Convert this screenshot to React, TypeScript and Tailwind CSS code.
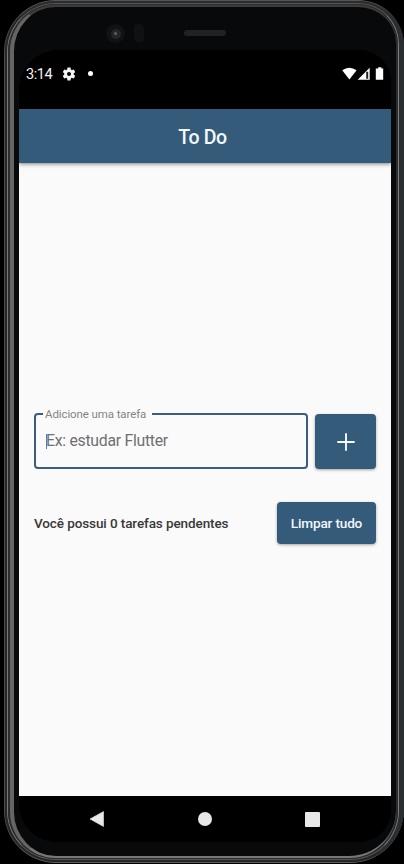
function Gear() {
  return (
    <svg viewBox="0 0 24 24" className="ml-[9px] h-[16px] w-[16px]" fill="#f4f4f4">
      <path d="M19.14 12.94c.04-.3.06-.61.06-.94 0-.32-.02-.64-.07-.94l2.03-1.58a.49.49 0 0 0 .12-.61l-1.92-3.32a.49.49 0 0 0-.59-.22l-2.39.96c-.5-.38-1.03-.7-1.62-.94l-.36-2.54a.48.48 0 0 0-.48-.41h-3.84a.48.48 0 0 0-.47.41l-.36 2.54c-.59.24-1.13.57-1.62.94l-2.39-.96a.48.48 0 0 0-.59.22L2.74 8.87a.48.48 0 0 0 .12.61l2.03 1.58c-.05.3-.09.63-.09.94s.02.64.07.94l-2.03 1.58a.49.49 0 0 0-.12.61l1.92 3.32c.12.22.37.29.59.22l2.39-.96c.5.38 1.03.7 1.62.94l.36 2.54c.05.24.24.41.48.41h3.84c.24 0 .44-.17.47-.41l.36-2.54c.59-.24 1.13-.56 1.62-.94l2.39.96c.22.08.47 0 .59-.22l1.92-3.32a.48.48 0 0 0-.12-.61l-2.01-1.58zM12 15A3 3 0 1 1 12 9a3 3 0 0 1 0 6z" />
    </svg>
  );
}

function StatusBar() {
  return (
    <div className="flex h-[59px] items-start bg-black pr-[6px] pl-[7px] text-[#f2f2f2]">
      <div className="flex h-[47px] flex-1 items-center">
        <span className="pt-[3px] text-[14.5px] leading-none tracking-[-0.4px]">3:14</span>
        <Gear />
        <span className="ml-[11px] h-[5px] w-[5px] rounded-full bg-white" />
      </div>
      <svg viewBox="0 0 43 14" className="mt-[17px] h-[14px] w-[43px]" fill="#fff">
        <path d="M0.2 3.2Q7.3-1.8 14.6 3.2L7.4 12.4z" />
        <path d="M27.7 0.8V12.8H15.7z" />
        <path d="M24.2 4.8h2v7h-2z" fill="#222" />
        <path d="M36.2 0.2h3.2v1.3h1.8V12.8h-7.4V1.5h2.4z" />
      </svg>
    </div>
  );
}

function AppBar() {
  return (
    <header className="z-10 flex h-[54px] items-center justify-center bg-[#355b7b] pt-[3px] pr-[5px] text-[19.5px] font-medium tracking-[-0.35px] text-[#f3f8fd] shadow-[0_1px_4px_rgba(0,0,0,0.5)]">
      To Do
    </header>
  );
}

function TaskField() {
  return (
    <fieldset className="h-[62px] w-[274px] rounded-[4px] border-2 border-[#3a5c7e] pl-[10px]">
      <legend className="-ml-[3px] h-[14px] w-[109px] pl-[2px] text-[11.5px] leading-[14px] tracking-[-0.1px] whitespace-nowrap text-[#858585]">
        Adicione uma tarefa
      </legend>
      <div className="flex items-center pt-[12px]">
        <span className="h-[15px] w-px bg-[#3486e8]" />
        <span className="-ml-px text-[15.8px] leading-[16px] tracking-[-0.27px] text-[#707070]">Ex: estudar Flutter</span>
      </div>
    </fieldset>
  );
}

function Content() {
  return (
    <main className="flex flex-1 flex-col bg-[#fafafa] pt-[244px] pr-[15px] pl-[15px]">
      <div className="flex items-end justify-between">
        <TaskField />
        <button className="flex h-[55px] w-[61px] items-center justify-center rounded-[4px] bg-[#355b7b] shadow-[0_1px_3px_rgba(0,0,0,0.35)]">
          <svg viewBox="0 0 18 18" className="h-[18px] w-[18px]" stroke="#f5faff" strokeWidth="1.9">
            <path d="M9 0.3V17.7M0.3 9H17.7" />
          </svg>
        </button>
      </div>
      <div className="mt-[33px] flex items-center justify-between">
        <span className="text-[13.5px] font-medium tracking-[-0.1px] text-[#383838]">Você possui 0 tarefas pendentes</span>
        <button className="h-[42px] w-[99px] rounded-[4px] bg-[#355b7b] text-[13.6px] font-medium tracking-[-0.18px] whitespace-nowrap text-[#f1f7fd] shadow-[0_1px_3px_rgba(0,0,0,0.35)]">
          Limpar tudo
        </button>
      </div>
    </main>
  );
}

function NavBar() {
  return (
    <nav className="flex h-[46px] items-center justify-between bg-black pr-[71px] pl-[70px]">
      <svg viewBox="0 0 16 16" className="h-4 w-4" fill="#e8e8e8">
        <path d="M1 8L14.5 0.5V15.5z" stroke="#e8e8e8" strokeWidth="0.6" strokeLinejoin="round" />
      </svg>
      <span className="h-[14px] w-[14px] rounded-full bg-[#e8e8e8]" />
      <span className="h-[15px] w-[15px] rounded-[1px] bg-[#e8e8e8]" />
    </nav>
  );
}

function TopBezel() {
  return (
    <div className="flex h-[43px] shrink-0 items-start pt-[17px] pl-[87px]">
      <span className="flex h-[19px] w-[19px] items-center justify-center rounded-full bg-[#111214]">
        <span className="flex h-[10px] w-[10px] items-center justify-center rounded-full bg-[#24272a]">
          <span className="h-[3px] w-[3px] rounded-full bg-[#5c6166]" />
        </span>
      </span>
      <span className="ml-[9px] h-[18px] w-[10px] rounded-[4px] bg-[#101113]" />
      <span className="mt-[6px] ml-[40px] h-[6px] w-[42px] rounded-full bg-[#212224]" />
    </div>
  );
}

export default function App() {
  return (
    <div className="h-[864px] w-[404px] overflow-hidden bg-black pl-1 font-['Roboto','Noto_Sans',sans-serif]">
      <div className="h-[863px] w-[400px] rounded-[52px_46px_54px_52px] border-t border-b border-l border-t-[#555] border-b-[#5a5a5a] border-l-[#4a4a4a] bg-[#2a2c2e]">
        <div className="h-full rounded-[51px_46px_53px_51px] border-t-2 border-r-[5px] border-b-2 border-l-2 border-t-[#2c2c2c] border-r-[#2b2e30] border-b-[#262626] border-l-[#262626] bg-[#333]">
          <div className="h-full rounded-[49px_41px_49px_49px] border border-t-[#555] border-r-[#7c7c7c] border-b-[#555] border-l-[#777]">
            <div className="h-full rounded-[48px_40px_48px_48px] border-t border-r-2 border-b border-l-2 border-[#2c2c2c] bg-[#3a3a3a]">
              <div className="flex h-full flex-col overflow-hidden rounded-[46px_38px_47px_46px] border-t-2 border-b-2 border-l-4 border-t-[#3c3c3c] border-b-[#777] border-l-[#656565] bg-[#08090b] pr-[5px] pl-[5px]">
                <TopBezel />
                <div className="flex h-[792px] shrink-0 flex-col overflow-hidden rounded-[40px_32px_32px_38px] bg-black">
                  <StatusBar />
                  <AppBar />
                  <Content />
                  <NavBar />
                </div>
              </div>
            </div>
          </div>
        </div>
      </div>
    </div>
  );
}
